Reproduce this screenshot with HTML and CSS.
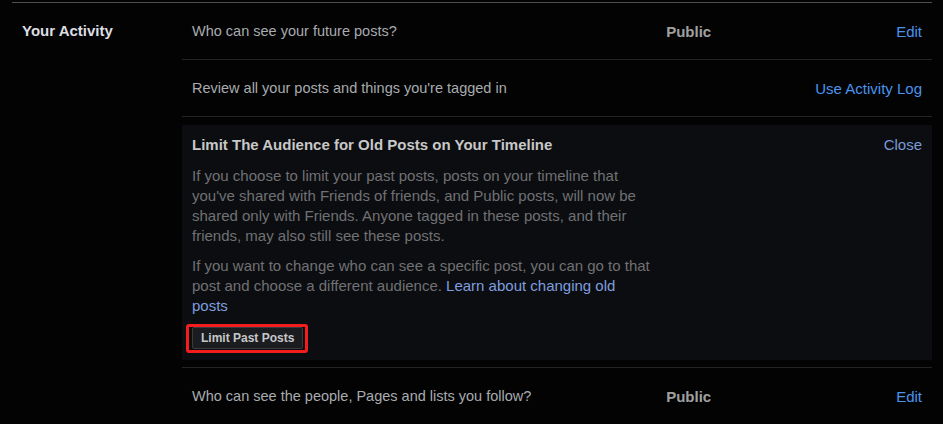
FILE: index.html
```html
<!DOCTYPE html>
<html lang="en">
    <head>
        <meta charset="UTF-8" />
        <meta name="viewport" content="width=device-width, initial-scale=1.0" />
        <title>Your Activity</title>
        <link rel="stylesheet" href="styles.css">
    </head>
    <body>
        <div class="section">
            <div class="section-title">Your Activity</div>
            <div class="section-body">
                <div class="row">
                    <span class="label">Who can see your future posts?</span>
                    <span class="value">Public</span>
                    <a class="action" href="#">Edit</a>
                </div>
                <div class="row">
                    <span class="label">Review all your posts and things you're tagged in</span>
                    <a class="action" href="#">Use Activity Log</a>
                </div>
                <div class="row row-open">
                    <div class="panel">
                        <div class="panel-head">
                            <h3>Limit The Audience for Old Posts on Your Timeline</h3>
                            <a class="close" href="#">Close</a>
                        </div>
                        <p>If you choose to limit your past posts, posts on your timeline that you've shared with Friends of friends, and Public posts, will now be shared only with Friends. Anyone tagged in these posts, and their friends, may also still see these posts.</p>
                        <p>If you want to change who can see a specific post, you can go to that post and choose a different audience. <a href="#">Learn about changing old posts</a></p>
                        <span class="highlight">
                            <button>Limit Past Posts</button>
                        </span>
                    </div>
                </div>
                <div class="row">
                    <span class="label">Who can see the people, Pages and lists you follow?</span>
                    <span class="value">Public</span>
                    <a class="action" href="#">Edit</a>
                </div>
            </div>
        </div>
    </body>
</html>
```

FILE: styles.css
```css
body {
    font-family: "Liberation Sans", Arial, sans-serif;
    font-size: 15px;
    background-color: #030303;
    color: #a8abaf;
    margin: 0;
}
a {
    text-decoration: none;
}
.section {
    display: flex;
    margin: 2px 11px 0 12px;
    border-top: 1px solid #4e4e4e;
}
.section-title {
    width: 170px;
    padding: 19px 0 0 10px;
    box-sizing: border-box;
    font-weight: bold;
    color: #dcdee2;
    line-height: 17px;
}
.section-body {
    flex: 1;
}
.row {
    display: flex;
    align-items: center;
    height: 56px;
    padding: 0 10px;
    border-bottom: 1px solid #232323;
}
.label {
    flex: 1;
    font-size: 14.5px;
}
.value {
    width: 230px;
    font-weight: bold;
    color: #a0a0a0;
}
.action {
    color: #4a93ee;
}
.row-open {
    height: auto;
    padding: 8px 0 7px;
}
.panel {
    flex: 1;
    background: #0c0d10;
    padding: 10px 10px 11px;
}
.panel-head {
    display: flex;
    justify-content: space-between;
    margin-bottom: 11px;
}
.panel h3 {
    margin: 0;
    font-size: 15px;
    line-height: 20px;
    color: #c8c8c8;
}
.close {
    line-height: 20px;
    color: #7a9ad8;
}
.panel p {
    width: 462px;
    margin: 0 0 10px;
    line-height: 20px;
    color: #707174;
}
.panel p a {
    color: #7f9edf;
}
.highlight {
    position: relative;
    display: inline-block;
    margin-top: 1px;
}
.highlight::after {
    content: "";
    position: absolute;
    top: -3px;
    left: -6px;
    right: -5px;
    bottom: -4px;
    border: 3px solid #f41d1d;
    border-radius: 3px;
}
button {
    display: block;
    height: 22px;
    padding: 0 8px;
    background: #1b1c1f;
    border: 1px solid #3a3b3d;
    border-radius: 2px;
    color: #c6c7c9;
    font-family: "Liberation Sans", Arial, sans-serif;
    font-size: 12px;
    font-weight: bold;
}
```
